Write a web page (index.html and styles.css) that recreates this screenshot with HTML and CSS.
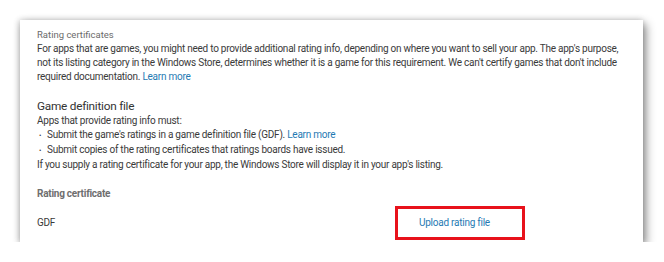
FILE: index.html
```html
<!DOCTYPE html>
<html lang="en">

<head>
    <meta charset="UTF-8">
    <title>Rating certificates</title>
    <link rel="stylesheet" href="styles.css">
</head>

<body>

    <div class="card">
        <div class="caption">Rating certificates</div>
        <p class="intro">For apps that are games, you might need to provide additional rating info, depending on where you want to sell your app. The app's purpose, not its listing category in the Windows Store, determines whether it is a game for this requirement. We can't certify games that don't include required documentation. <a href="#">Learn more</a></p>

        <h3>Game definition file</h3>
        <p>Apps that provide rating info must:</p>
        <ul class="bullets">
            <li>Submit the game's ratings in a game definition file (GDF). <a href="#">Learn more</a></li>
            <li>Submit copies of the rating certificates that ratings boards have issued.</li>
        </ul>
        <p>If you supply a rating certificate for your app, the Windows Store will display it in your app's listing.</p>

        <div class="label">Rating certificate</div>
        <div class="file-row">
            <span class="file-type">GDF</span>
            <span class="upload"><a href="#">Upload rating file</a></span>
        </div>
    </div>

</body>

</html>
```

FILE: styles.css
```css
body {
    font-family: Roboto, Lato, sans-serif;
    font-size: 10px;
    letter-spacing: -0.25px;
    line-height: 14px;
    color: #3a3a3a;
    background-color: #fff;
    margin: 0;
    padding: 20px 21px 0 20px;
}

.card {
    background-color: #fff;
    height: 222px;
    box-sizing: border-box;
    padding: 8px 17px 0;
    box-shadow: 3px 4px 9px rgba(0, 0, 0, 0.45), -1px 0 6px rgba(0, 0, 0, 0.2);
}

a {
    color: #1f7ab3;
    text-decoration: none;
}

p {
    margin: 0;
}

.caption {
    color: #6b6b6b;
    font-size: 9.5px;
    letter-spacing: 0;
}

h3 {
    font-size: 11.8px;
    font-weight: normal;
    color: #333;
    margin: 14px 0 0;
    line-height: 16px;
}

.bullets {
    list-style: none;
    margin: 0;
    padding: 0;
}

.bullets li::before {
    content: "•";
    display: inline-block;
    width: 10px;
    padding-left: 2px;
    box-sizing: border-box;
    font-size: 7px;
}

.label {
    font-weight: bold;
    color: #6e6e6e;
    margin-top: 15px;
}

.file-row {
    display: flex;
    align-items: center;
    margin-top: 5px;
}

.file-type {
    width: 358px;
}

.upload {
    border: 3px solid #e8121b;
    width: 130px;
    height: 34px;
    box-sizing: border-box;
    padding-left: 21px;
    display: flex;
    align-items: center;
}
```
